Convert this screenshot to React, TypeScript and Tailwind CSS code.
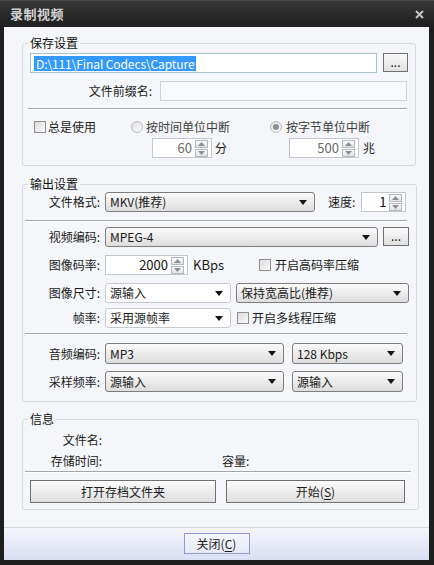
import React from 'react';

const Arrow: React.FC = () => (
  <svg width="8" height="5" viewBox="0 0 8 5">
    <path d="M0 0h8L4 5z" fill="#151515" />
  </svg>
);

const Select: React.FC<{ w: string; text: string; flat?: boolean }> = ({ w, text, flat }) => (
  <div
    className={`${w} h-full flex items-center justify-between pl-[4px] pr-[7px] rounded-[3px] border ${
      flat ? 'border-[#c6cad0] bg-white' : 'border-[#7d7d7d] bg-linear-to-b from-[#fbfbfb] to-[#dddddd]'
    }`}
  >
    <span className="truncate">{text}</span>
    <Arrow />
  </div>
);

const SpinArrows: React.FC = () => (
  <div className="w-[13px] h-[17px] flex flex-col gap-px">
    <div className="flex-1 flex items-center justify-center border border-[#b5b9bf] bg-linear-to-b from-[#fbfbfb] to-[#e3e3e3]">
      <svg width="7" height="4" viewBox="0 0 7 4">
        <path d="M0 4h7L3.5 0z" fill="#8a8f96" />
      </svg>
    </div>
    <div className="flex-1 flex items-center justify-center border border-[#b5b9bf] bg-linear-to-b from-[#fbfbfb] to-[#e3e3e3]">
      <svg width="7" height="4" viewBox="0 0 7 4">
        <path d="M0 0h7L3.5 4z" fill="#8a8f96" />
      </svg>
    </div>
  </div>
);

const Spin: React.FC<{ w: string; value: string; dim?: boolean }> = ({ w, value, dim }) => (
  <div className={`${w} h-full flex items-center border border-[#c3c7cd] bg-white pr-[3px]`}>
    <span className={`flex-1 text-right pr-[3px] text-[13px] ${dim ? 'text-[#6a6a6a]' : 'text-[#111]'}`}>{value}</span>
    <SpinArrows />
  </div>
);

const Check: React.FC = () => (
  <div className="w-[12px] h-[12px] border border-[#8e8f8f] bg-linear-to-br from-[#dcdcdc] to-[#fbfbfb] shrink-0" />
);

const Radio: React.FC<{ on?: boolean }> = ({ on }) => (
  <div className="w-[12px] h-[12px] rounded-full border border-[#b9bbbe] bg-linear-to-br from-[#e2e2e2] to-[#fafafa] flex items-center justify-center shrink-0">
    {on && <div className="w-[6px] h-[6px] rounded-full bg-[#8d9095]" />}
  </div>
);

const Btn: React.FC<{ w: string; children: React.ReactNode }> = ({ w, children }) => (
  <div className={`${w} h-full flex items-center justify-center border border-[#707070] bg-linear-to-b from-[#fbfbfb] to-[#dfdfdf]`}>
    {children}
  </div>
);

const Label: React.FC<{ children: React.ReactNode; pr?: string }> = ({ children, pr = 'pr-[5px]' }) => (
  <div className={`w-[75px] shrink-0 text-right ${pr}`}>{children}</div>
);

const Sep: React.FC<{ cls: string }> = ({ cls }) => (
  <div className={`${cls} h-[2px] border-t border-[#a3a6aa] border-b border-b-white`} />
);

const Legend: React.FC<{ children: React.ReactNode }> = ({ children }) => (
  <legend className="-ml-[2px] px-[2px] leading-[16px] text-[#111]">{children}</legend>
);

export default function App() {
  return (
    <div className="w-[434px] h-[565px] bg-[#1e1e1e] flex flex-col text-[12px] leading-[16px] text-[#1a1a1a] font-['Noto_Sans_CJK_SC','Noto_Sans',sans-serif]">
      {/* title bar */}
      <div className="h-[27px] shrink-0 flex items-center justify-between pl-[10px] pr-[10px] border-t border-[#4b4b4b] bg-linear-to-b from-[#363636] to-[#1f1f1f]">
        <span className="text-[13px] font-bold text-[#d2d2d2] tracking-[0.5px]">录制视频</span>
        <svg width="9" height="9" viewBox="0 0 9 9">
          <path d="M1 1l7 7M8 1L1 8" stroke="#c4c4c4" strokeWidth="2" />
        </svg>
      </div>

      <div className="flex-1 ml-[4px] mr-[5px] mb-[5px] bg-[#f4f6f9] flex flex-col">
        {/* 保存设置 */}
        <fieldset className="mt-[8px] ml-[18px] w-[394px] border border-[#d6dbe2] rounded-[3px] px-[7px] pt-[2px] pb-[7px]">
          <Legend>保存设置</Legend>
          <div className="h-[20px] flex gap-[6px]">
            <div className="w-[347px] h-full flex items-center pl-[3px] border border-[#a7c2ca] bg-white">
              <span className="bg-[#3399ff] text-white px-[2px] leading-[15px] text-[12px] tracking-[-0.1px]">D:\111\Final Codecs\Capture</span>
            </div>
            <div className="h-[19px] flex">
              <Btn w="w-[25px]">
                <span className="leading-[8px] pb-[2px]">...</span>
              </Btn>
            </div>
          </div>
          <div className="mt-[8px] h-[20px] flex">
            <div className="w-[130px] text-right pr-[8px] leading-[20px]">文件前缀名:</div>
            <div className="w-[247px] h-full border border-[#cfd3d9] bg-[#f8f9fb]" />
          </div>
          <Sep cls="mt-[7px] -ml-[2px] w-[379px]" />
          <div className="mt-[8px] h-[18px] flex items-center pl-[4px]">
            <div className="w-[97px] flex items-center gap-[2px]">
              <Check />
              <span>总是使用</span>
            </div>
            <div className="w-[139px] flex items-center gap-[3px] text-[#3c3c3c]">
              <Radio />
              <span>按时间单位中断</span>
            </div>
            <div className="flex items-center gap-[4px] text-[#3c3c3c]">
              <Radio on />
              <span>按字节单位中断</span>
            </div>
          </div>
          <div className="mt-[2px] h-[20px] flex items-center pl-[122px]">
            <div className="w-[137px] h-full flex items-center gap-[3px]">
              <Spin w="w-[60px]" value="60" dim />
              <span>分</span>
            </div>
            <div className="h-full flex items-center gap-[4px]">
              <Spin w="w-[70px]" value="500" dim />
              <span>兆</span>
            </div>
          </div>
        </fieldset>

        {/* 输出设置 */}
        <fieldset className="mt-[10px] ml-[18px] w-[394px] border border-[#d6dbe2] rounded-[3px] px-[7px] pb-[9px]">
          <Legend>输出设置</Legend>
          <div className="h-[20px] flex items-center">
            <Label>文件格式:</Label>
            <Select w="w-[210px]" text="MKV(推荐)" />
            <span className="ml-[13px]">速度:</span>
            <div className="ml-[6px] h-full flex">
              <Spin w="w-[45px]" value="1" />
            </div>
          </div>
          <Sep cls="mt-[8px] -ml-[5px] w-[382px]" />
          <div className="mt-[5px] h-[20px] flex items-center">
            <Label>视频编码:</Label>
            <Select w="w-[273px]" text="MPEG-4" />
            <div className="ml-[5px] h-[19px] self-start flex">
              <Btn w="w-[26px]">
                <span className="leading-[8px] pb-[2px]">...</span>
              </Btn>
            </div>
          </div>
          <div className="mt-[8px] h-[20px] flex items-center">
            <Label>图像码率:</Label>
            <div className="w-[154px] h-full flex items-center gap-[5px]">
              <Spin w="w-[83px]" value="2000" />
              <span className="text-[13px]">KBps</span>
            </div>
            <div className="flex items-center gap-[4px]">
              <Check />
              <span>开启高码率压缩</span>
            </div>
          </div>
          <div className="mt-[8px] h-[20px] flex items-center gap-[5px]">
            <Label>图像尺寸:</Label>
            <Select w="w-[126px] -ml-[5px]" text="源输入" flat />
            <Select w="w-[173px]" text="保持宽高比(推荐)" />
          </div>
          <div className="mt-[5px] h-[20px] flex items-center">
            <Label>帧率:</Label>
            <Select w="w-[126px]" text="采用源帧率" flat />
            <div className="ml-[6px] flex items-center gap-[3px]">
              <Check />
              <span>开启多线程压缩</span>
            </div>
          </div>
          <Sep cls="mt-[5px] -ml-[5px] w-[382px]" />
          <div className="mt-[8px] h-[21px] flex items-center">
            <Label>音频编码:</Label>
            <Select w="w-[179px]" text="MP3" />
            <div className="ml-[8px] h-full flex">
              <Select w="w-[111px]" text="128 Kbps" />
            </div>
          </div>
          <div className="mt-[7px] h-[21px] flex items-center">
            <Label>采样频率:</Label>
            <Select w="w-[179px]" text="源输入" />
            <div className="ml-[8px] h-full flex">
              <Select w="w-[111px]" text="源输入" />
            </div>
          </div>
        </fieldset>

        {/* 信息 */}
        <fieldset className="mt-[9px] ml-[18px] w-[394px] border border-[#d6dbe2] rounded-[3px] px-[7px] pb-[6px]">
          <Legend>信息</Legend>
          <div className="mt-[5px] h-[16px] flex items-center">
            <Label pr="pr-[3px]">文件名:</Label>
          </div>
          <div className="mt-[5px] h-[16px] flex items-center">
            <Label pr="pr-[3px]">存储时间:</Label>
            <span className="ml-[117px]">容量:</span>
          </div>
          <Sep cls="mt-[2px] -ml-[5px] w-[386px]" />
          <div className="mt-[7px] h-[23px] flex">
            <Btn w="w-[186px]">打开存档文件夹</Btn>
            <div className="ml-[10px] h-full flex">
              <Btn w="w-[179px]">
                开始(<span className="underline underline-offset-2">S</span>)
              </Btn>
            </div>
          </div>
        </fieldset>

        <div className="flex-1" />

        {/* bottom bar */}
        <div className="h-[33px] shrink-0 border-t border-[#d2d6df] bg-linear-to-b from-[#f5f6fb] to-[#dadef3] flex justify-center pt-[5px]">
          <div className="w-[66px] h-[21px] flex items-center justify-center border border-[#8e98d6] bg-linear-to-b from-[#f6f7fc] to-[#e6e8f6]">
            关闭(<span className="underline underline-offset-2">C</span>)
          </div>
        </div>
      </div>
    </div>
  );
}
